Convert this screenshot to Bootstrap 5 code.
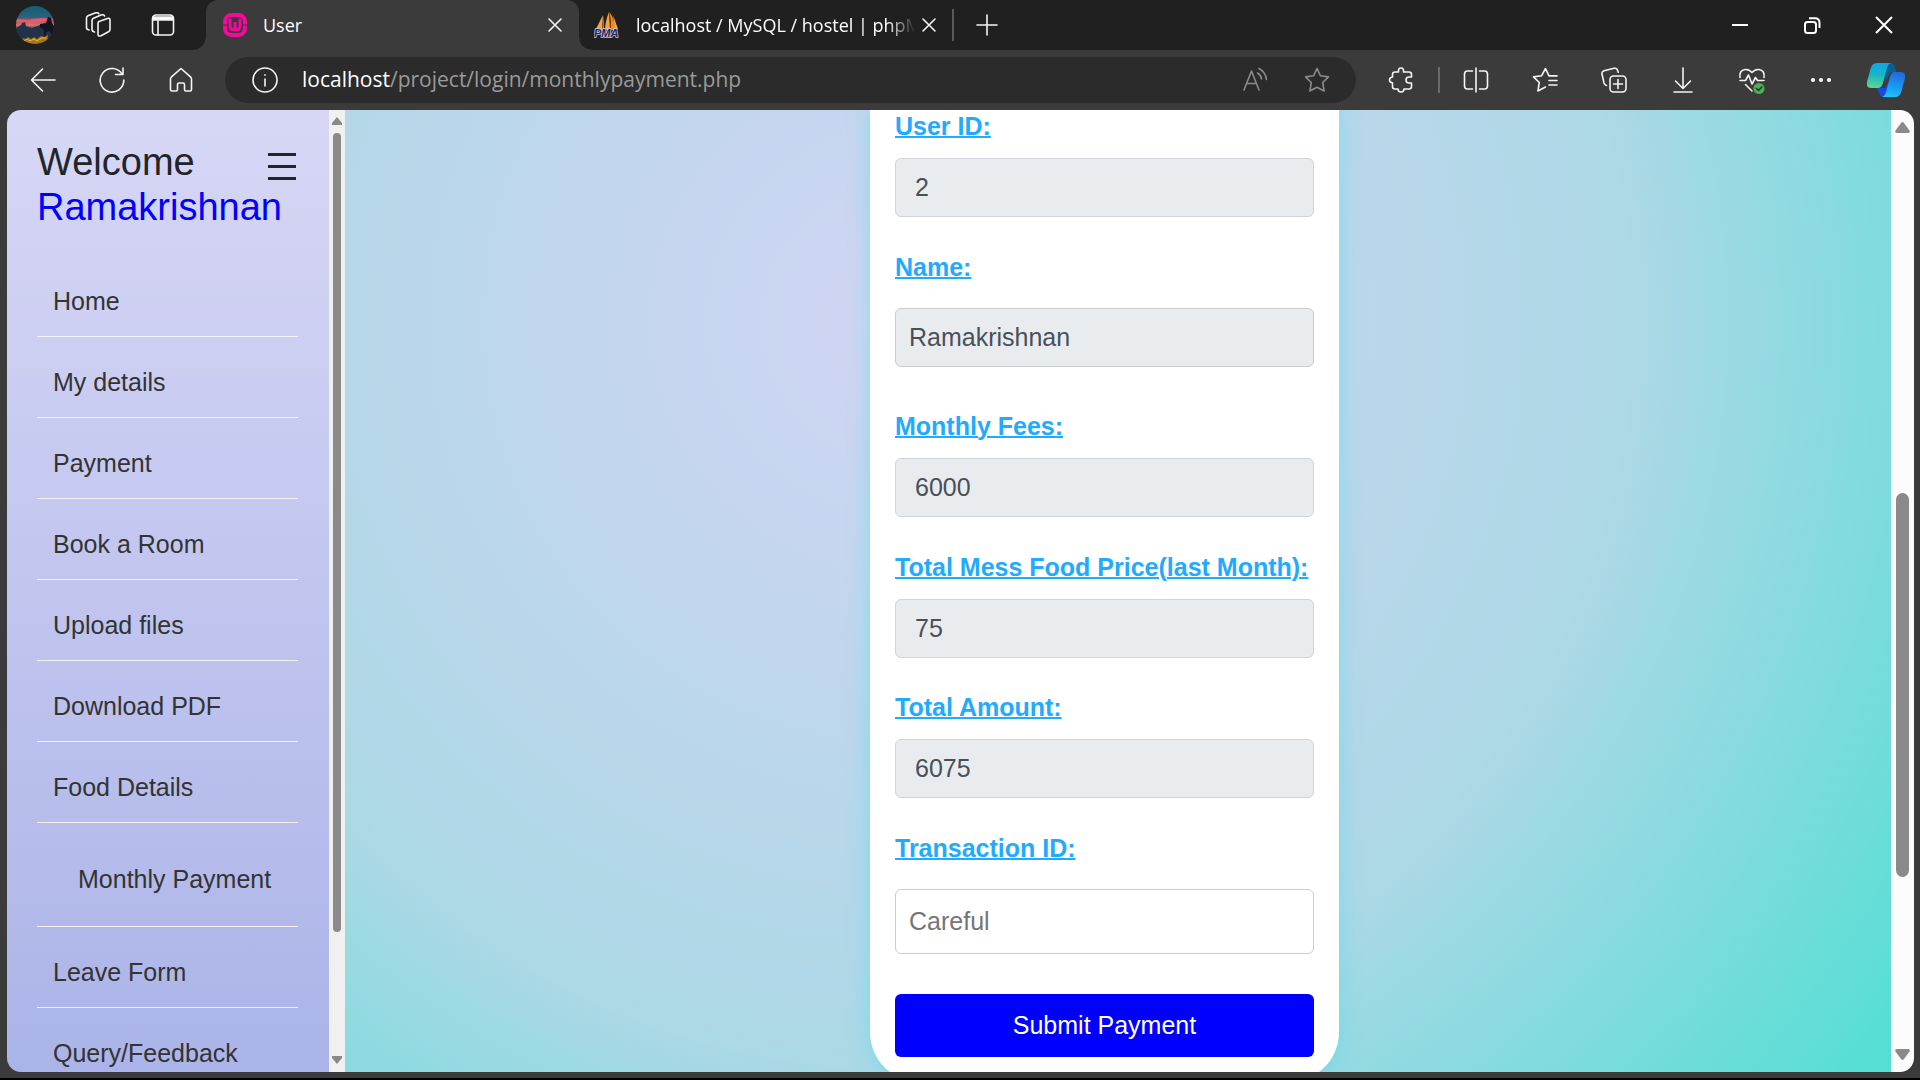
<!DOCTYPE html>
<html lang="en">
<head>
<meta charset="utf-8">
<meta name="viewport" content="width=device-width, initial-scale=1">
<title>User</title>
<link href="https://cdn.jsdelivr.net/npm/bootstrap@5.3.0/dist/css/bootstrap.min.css" rel="stylesheet">
<style>
  body { font-family: "Liberation Sans", Arial, sans-serif; font-size: 25px; }
  svg { display: block; }
  .line-icon { width: 26px; height: 26px; fill: none; stroke: #f4f4f4; stroke-width: 1.6; stroke-linecap: round; stroke-linejoin: round; flex: none; }

  /* browser window */
  .browser { background: #3b3b3b; border-bottom: 2px solid #000; overflow: hidden; font-family: "Open Sans", "Noto Sans", sans-serif; }
  .plain-btn { background: none; border: 0; padding: 0; display: flex; align-items: center; justify-content: center; flex: none; }
  .tab-strip { height: 50px; background: #202020; color: #fff; font-size: 18px; }
  .avatar { margin-left: 16px; margin-right: 11px; }
  .strip-btn { width: 65px; height: 50px; }
  .tab-active { position: relative; width: 373px; height: 50px; margin-left: 11px; padding: 0 10px 0 17px; background: #3b3b3b; border-radius: 12px 12px 0 0; }
  .tab-active::before, .tab-active::after { content: ""; position: absolute; bottom: 0; width: 12px; height: 12px; }
  .tab-active::before { right: 100%; background: radial-gradient(circle at 0 0, #202020 11px, #3b3b3b 12px); }
  .tab-active::after { left: 100%; background: radial-gradient(circle at 100% 0, #202020 11px, #3b3b3b 12px); }
  .tab-idle { width: 373px; padding: 0 9px 0 15px; }
  .tab-title { margin-left: 16px; line-height: 26px; white-space: nowrap; overflow: hidden; }
  .tab-fade { -webkit-mask-image: linear-gradient(to right, #000 90%, transparent 100%); mask-image: linear-gradient(to right, #000 90%, transparent 100%); }
  .tab-close { width: 28px; height: 28px; }
  .strip-rule { width: 2px; height: 32px; background: #5a5a5a; }
  .win-btn { width: 72px; height: 50px; }
  .toolbar-row { height: 60px; padding-left: 8px; padding-right: 4px; }
  .tool-btn { width: 69px; height: 46px; }
  .tool-btn-brand { width: 61px; height: 46px; }
  .tool-rule { width: 2px; height: 26px; margin: 0 1px 0 3px; background: #6a6a6a; }
  .omnibox { height: 46px; margin: 0 10px; padding: 0 26px 0 27px; border-radius: 23px; background: #2b2b2b; color: #9a9a9a; font-size: 21px; }
  .omnibox .dim { stroke: #8b8b8b; }
  .omni-actions { gap: 36px; }

  /* page area */
  .viewport { margin: 0 6px 6px 7px; border-radius: 14px; overflow: hidden; min-height: 0; font-family: "Liberation Sans", Arial, sans-serif; }
  .side { width: 322px; padding: 30px 31px 0 30px; overflow: hidden; background: linear-gradient(#d7d7f5, #abb4e8); }
  .side-title { font-size: 38px; line-height: 45px; color: #212529; }
  .side-toggle { height: 45px; padding-top: 8px; margin-right: 2px; }
  .side-name { font-size: 38px; line-height: 45px; color: #00f; margin-bottom: 26px; }
  .side-menu a { display: block; padding: 27px 16px 16px; line-height: 37px; color: #333; text-decoration: none; border-bottom: 1px solid #f2f2f4; white-space: nowrap; }
  .side-menu .sub-link a { padding: 38px 0 28px 41px; }

  .scroll-track { width: 16px; padding: 7px 0 8px; background: #f0f0f0; }
  .scroll-track-page { width: 23px; padding: 12px 0; background: #fcfcfc; }
  .scroll-track svg, .scroll-track-page svg { fill: #8a8a8a; flex: none; }
  .scroll-body { width: 8px; margin-top: 8px; }
  .scroll-track-page .scroll-body { width: 13px; margin-top: 0; }
  .scroll-thumb { width: 100%; border-radius: 7px; background: #8a8a8a; }

  .stage { min-width: 0; padding-right: 27px; overflow: hidden;
    background: radial-gradient(circle at 36% 22%, #d1d5f3 0, #add8e6 730px, #40e0d0 1340px); }
  .pay-card { width: 469px; padding: 1px 25px 25px; background: #fff; border-radius: 0 0 50px 50px; box-shadow: 0 0 20px rgba(64, 224, 240, .5); }
  .pay-label { display: block; width: fit-content; margin-bottom: 17px; line-height: 30px; font-weight: 700; color: #22aaff; text-decoration: underline; text-decoration-thickness: 2px; white-space: nowrap; }
  .pay-field { margin-bottom: 35px; }
  .pay-field .form-control { height: 59px; padding: 0 19px; font-size: 25px; color: #495057; border: 1px solid #ced4da; border-radius: 6px; background: #e9ecef; }
  .pay-field-wide { margin-bottom: 44px; }
  .pay-field-wide .pay-label { margin-bottom: 26px; }
  .pay-field-wide .form-control { padding: 0 13px; border-color: #ccc; }
  .pay-field-tight { margin-bottom: 34px; }
  .pay-entry { margin-bottom: 40px; }
  .pay-entry .form-control { height: 65px; background: #fff; }
  .pay-entry .form-control::placeholder { color: #757575; opacity: 1; }
  .pay-submit { height: 63px; font-size: 25px; color: #fff; background: #00f; border: 0; border-radius: 6px; }
</style>
<script src="https://cdn.jsdelivr.net/npm/bootstrap@5.3.0/dist/js/bootstrap.bundle.min.js"></script>
</head>
<body>
<div class="browser vh-100 d-flex flex-column">

  <header class="tab-strip d-flex align-items-center flex-shrink-0">
    <button class="plain-btn avatar" aria-label="Profile">
      <svg width="38" height="38" viewBox="0 0 38 38">
        <defs>
          <clipPath id="av"><circle cx="19" cy="19" r="19"/></clipPath>
          <linearGradient id="sky" x1="0" y1="0" x2="0" y2="1">
            <stop offset="0" stop-color="#145f75"/><stop offset=".28" stop-color="#27617a"/><stop offset=".4" stop-color="#b8566a"/><stop offset=".5" stop-color="#d8746c"/><stop offset=".6" stop-color="#53506e"/><stop offset="1" stop-color="#1d2c40"/>
          </linearGradient>
        </defs>
        <g clip-path="url(#av)">
          <rect width="38" height="38" fill="url(#sky)"/>
          <path d="M0 13l12 1 14-2 12 1v1l-14 2-10 1-14-1z" fill="#e65d68"/>
          <path d="M0 22l5-3 1-2 3-1 1 4 6 2 8-3 14 4v15H0z" fill="#22324a"/>
          <path d="M24 18l6-1 2-6 3 1 1 5 2 3v10l-2 2-2-7-4 1-1 7h-1v-9l-4-3z" fill="#11151f"/>
          <path d="M4 38l3-6 3 1 2-2 3 2 3-2 3 2 4-3 3 1 4-2-1 9z" fill="#a8741c"/>
          <path d="M8 35l3-2 3 2 4-2 3 2 5-3 4 0" stroke="#f2b735" fill="none"/>
        </g>
      </svg>
    </button>
    <button class="plain-btn strip-btn" aria-label="Workspaces">
      <svg class="line-icon" viewBox="0 0 26 26"><path d="M14 9.500l8.500-3q2.500-.8 2.500 1.500v9.500q0 1.500-1.500 2.200l-7.500 4q-3 1.200-3-1.500V11.500q0-1.500 1-2z"/><path d="M9.500 20q-2.500-.5-2.500-2.500V8.500q0-1.500 1.500-2.200l7.500-3.300q3-.9 3.500 1"/><path d="M4 18q-2.500-.5-2.500-2.500V6q0-1.500 1.500-2.200L10 1q3-.9 3.800.7"/></svg>
    </button>
    <button class="plain-btn strip-btn" aria-label="Tab actions">
      <svg class="line-icon" viewBox="0 0 26 26"><rect x="2.500" y="3" width="21" height="20" rx="3.500"/><path d="M3 5h20v3H3z" fill="#fff"/><path d="M8 9v14"/></svg>
    </button>

    <div class="tab-active d-flex align-items-center">
      <svg width="24" height="24" viewBox="0 0 24 24" class="flex-shrink-0">
        <rect x="2" y="2" width="20" height="20" rx="6.500" fill="none" stroke="#f7079b" stroke-width="4"/>
        <path d="M0 12h24" stroke="#3b3b3b" stroke-width="1"/>
        <path d="M5 5h14v14H5z" fill="#3b3b3b"/>
        <path d="M7 5.500V13q0 4 5 4t5-4V5.500M12 9v8" fill="none" stroke="#f7079b" stroke-width="3"/>
      </svg>
      <span class="tab-title flex-fill">User</span>
      <button class="plain-btn tab-close" aria-label="Close tab"><svg class="line-icon" viewBox="0 0 26 26"><path d="M7 7l12 12M19 7L7 19"/></svg></button>
    </div>
    <div class="tab-idle d-flex align-items-center">
      <svg width="26" height="26" viewBox="0 0 26 26" class="flex-shrink-0">
        <path d="M9 3L1.500 18H8z" fill="#f6a545"/><path d="M10 3v16H8z" fill="#c9771d"/>
        <path d="M15 0q-4 10-4 18h5z" fill="#f9a13a"/><path d="M15.500 0q2 9 1 18h5q-1-11-6-18z" fill="#f28a12"/><path d="M19 3l5 14-3 1z" fill="#f6a545"/>
        <text x="0" y="25" font-family="Liberation Sans" font-size="11" font-weight="700" font-style="italic" fill="#25265e" stroke="#c9c9df" stroke-width="1.500" paint-order="stroke">PMA</text>
      </svg>
      <span class="tab-title tab-fade flex-fill">localhost / MySQL / hostel | phpM</span>
      <button class="plain-btn tab-close" aria-label="Close tab"><svg class="line-icon" viewBox="0 0 26 26"><path d="M7 7l12 12M19 7L7 19"/></svg></button>
    </div>
    <div class="strip-rule"></div>
    <button class="plain-btn strip-btn" aria-label="New tab"><svg class="line-icon" viewBox="0 0 26 26"><path d="M13 3v20M3 13h20"/></svg></button>

    <div class="d-flex ms-auto">
      <button class="plain-btn win-btn" aria-label="Minimize"><svg width="16" height="16"><path d="M0 8h16" stroke="#fff" stroke-width="2"/></svg></button>
      <button class="plain-btn win-btn" aria-label="Restore"><svg width="18" height="18" fill="none" stroke="#fff" stroke-width="2"><rect x="2" y="6" width="11" height="11" rx="2.500"/><path d="M6 2.200h6q4.500 0 4.500 4.500V12"/></svg></button>
      <button class="plain-btn win-btn" aria-label="Close"><svg width="18" height="18" stroke="#fff" stroke-width="2"><path d="M1 1l16 16M17 1L1 17"/></svg></button>
    </div>
  </header>

  <nav class="toolbar-row d-flex align-items-center flex-shrink-0" aria-label="Toolbar">
    <button class="plain-btn tool-btn" aria-label="Back"><svg class="line-icon" viewBox="0 0 26 26"><path d="M1.500 13H25M12.500 2L1.500 13l11 11"/></svg></button>
    <button class="plain-btn tool-btn" aria-label="Refresh"><svg class="line-icon" viewBox="0 0 26 26"><path d="M23.300 7.500A11.800 11.800 0 1 0 24.800 13M24 1v6.500h-7.500"/></svg></button>
    <button class="plain-btn tool-btn" aria-label="Home"><svg class="line-icon" viewBox="0 0 26 26"><path d="M13 1.500l-9.800 8.700q-.7.700-.7 1.800v10.500q0 1.500 1.500 1.500h4q1.500 0 1.500-1.500v-5q0-1.500 1.500-1.500h4q1.500 0 1.500 1.500v5q0 1.500 1.500 1.500h4q1.500 0 1.500-1.500V12q0-1.100-.7-1.800z"/></svg></button>

    <div class="omnibox d-flex align-items-center flex-fill">
      <svg class="line-icon" viewBox="0 0 26 26"><circle cx="13" cy="13" r="12"/><path d="M13 12v7M13 7.800v.4"/></svg>
      <span class="flex-fill ms-4"><span class="text-white">localhost</span>/project/login/monthlypayment.php</span>
      <div class="omni-actions d-flex">
        <button class="plain-btn" aria-label="Read aloud"><svg class="line-icon dim" viewBox="0 0 26 26"><path d="M2 23L9.500 4 17 23M4.500 16.500h10M15.500 6q3.500 2 4 6M17 1.500q6.500 3.500 7.500 11"/></svg></button>
        <button class="plain-btn" aria-label="Add to favorites"><svg class="line-icon dim" viewBox="0 0 26 26"><path d="M13 1.500l3.500 7.300 8 1.100-5.800 5.600 1.400 8.500L13 20.200 5.900 24l1.400-8.500L1.500 9.900l8-1.100z"/></svg></button>
      </div>
    </div>

    <button class="plain-btn tool-btn" aria-label="Extensions"><svg class="line-icon" viewBox="0 0 26 26"><path d="M4.500 7.500q0-2.500 2.500-2.500h3.500q-.5-4 2.500-4t2.500 4H21q2.500 0 2.500 2.500V10H21q-3 0-3 3t3 3h2.500v3.500q0 2.500-2.500 2.500h-5q0 3-3 3t-3-3H7q-2.500 0-2.500-2.500v-3.800Q1.500 15.500 1.500 13t3-3z"/></svg></button>
    <div class="tool-rule"></div>
    <button class="plain-btn tool-btn" aria-label="Split screen"><svg class="line-icon" viewBox="0 0 26 26"><path d="M9.500 4H4.500Q1.500 4 1.500 7v12q0 3 3 3h5M16.500 4h5q3 0 3 3v12q0 3-3 3h-5M13 1v24"/></svg></button>
    <button class="plain-btn tool-btn" aria-label="Favorites"><svg class="line-icon" viewBox="0 0 26 26"><path d="M17 8.800L13.500 1.500 9.500 8.800l-8 1.100 5.800 5.600L5.900 24l7.600-4M17.500 8.900H25M17 13.500h8M17 18h8"/></svg></button>
    <button class="plain-btn tool-btn" aria-label="Collections"><svg class="line-icon" viewBox="0 0 26 26"><rect x="9" y="9" width="16" height="16" rx="3.500"/><path d="M17 12.500v9M12.500 17h9M5.500 18.500Q3.500 18 3 16L1 7q-.5-2.500 2-3.200l10-2.500q3-.5 3.500 2l.7 2"/></svg></button>
    <button class="plain-btn tool-btn" aria-label="Downloads"><svg class="line-icon" viewBox="0 0 26 26"><path d="M13 1v20M5.500 14l7.500 7.500 7.500-7.500M4 25h18"/></svg></button>
    <button class="plain-btn tool-btn" aria-label="Browser essentials"><svg class="line-icon" viewBox="0 0 26 26" overflow="visible"><path d="M1 10.500Q0 3.500 6 2.500q4-.5 7 3 3-3.500 7-3 6 1 5 8M1 13.500h5.500l3-5.500 3.500 9 3.500-6.500 2 3H25M6.500 17.500L13 24"/><circle cx="20" cy="21.500" r="5.500" fill="#4caf50" stroke="none"/><path d="M17.500 21.500l2 2 3.300-3.500" stroke="#223333"/></svg></button>
    <button class="plain-btn tool-btn" aria-label="Settings and more"><svg width="22" height="6" fill="#fff"><circle cx="3" cy="3" r="2"/><circle cx="11" cy="3" r="2"/><circle cx="19" cy="3" r="2"/></svg></button>
    <button class="plain-btn tool-btn-brand" aria-label="Copilot">
      <svg width="38" height="34" viewBox="0 0 38 34">
        <defs>
          <linearGradient id="cpA" x1=".4" y1="0" x2=".3" y2="1"><stop offset="0" stop-color="#0fa8e8"/><stop offset=".45" stop-color="#16b5c4"/><stop offset="1" stop-color="#5fd68c"/></linearGradient>
          <linearGradient id="cpB" x1=".6" y1="0" x2=".4" y2="1"><stop offset="0" stop-color="#2368dc"/><stop offset=".6" stop-color="#189cf5"/><stop offset="1" stop-color="#1fc4fb"/></linearGradient>
        </defs>
        <path d="M20 0h3q4 0 5 4l1.500 5H26q-3 0-4 3l-4 8z" fill="#0b5f8f"/>
        <path d="M10 25h8l5-9-4 18h-2q-4 0-5-4z" fill="#1a49dd"/>
        <path d="M10 0h14q-3 1-4 5l-4 15q-1.500 5-5 5H4q-5 0-4-6L3.500 6Q5 0 10 0z" fill="url(#cpA)"/>
        <path d="M27 9h7q5 0 4 6l-3.500 13q-1.500 6-6.500 6H15q3-1 4-5l4-15q1.500-5 4-5z" fill="url(#cpB)"/>
      </svg>
    </button>
  </nav>

  <div class="viewport d-flex flex-fill">
    <aside class="side flex-shrink-0">
      <div class="d-flex justify-content-between">
        <div class="side-title">Welcome</div>
        <button class="plain-btn side-toggle" aria-label="Toggle menu"><svg width="28" height="28" fill="#212529"><path d="M0 0h28v3H0zM0 12h28v3H0zM0 24h28v3H0z"/></svg></button>
      </div>
      <div class="side-name">Ramakrishnan</div>
      <ul class="side-menu list-unstyled mb-0">
        <li><a href="#">Home</a></li>
        <li><a href="#">My details</a></li>
        <li><a href="#">Payment</a></li>
        <li><a href="#">Book a Room</a></li>
        <li><a href="#">Upload files</a></li>
        <li><a href="#">Download PDF</a></li>
        <li><a href="#">Food Details</a></li>
        <li class="sub-link"><a href="#">Monthly Payment</a></li>
        <li><a href="#">Leave Form</a></li>
        <li><a href="#">Query/Feedback</a></li>
      </ul>
    </aside>
    <div class="scroll-track d-flex flex-column align-items-center flex-shrink-0" aria-hidden="true">
      <svg width="10" height="8"><path d="M5 0l5 6v2H0V6z"/></svg>
      <div class="scroll-body d-flex flex-column flex-fill">
        <div class="scroll-thumb" style="flex: 799 1 0"></div>
        <div style="flex: 124 1 0"></div>
      </div>
      <svg width="10" height="8"><path d="M0 0h10v2L5 8 0 2z"/></svg>
    </div>

    <main class="stage d-flex flex-fill justify-content-center align-items-start">
      <form class="pay-card flex-shrink-0">
        <div class="pay-field">
          <label class="pay-label" for="userId">User ID:</label>
          <input class="form-control" id="userId" type="text" value="2" readonly>
        </div>
        <div class="pay-field pay-field-wide">
          <label class="pay-label" for="userName">Name:</label>
          <input class="form-control" id="userName" type="text" value="Ramakrishnan" readonly>
        </div>
        <div class="pay-field">
          <label class="pay-label" for="fees">Monthly Fees:</label>
          <input class="form-control" id="fees" type="text" value="6000" readonly>
        </div>
        <div class="pay-field pay-field-tight">
          <label class="pay-label" for="mess">Total Mess Food Price(last Month):</label>
          <input class="form-control" id="mess" type="text" value="75" readonly>
        </div>
        <div class="pay-field">
          <label class="pay-label" for="total">Total Amount:</label>
          <input class="form-control" id="total" type="text" value="6075" readonly>
        </div>
        <div class="pay-field pay-field-wide pay-entry">
          <label class="pay-label" for="txn">Transaction ID:</label>
          <input class="form-control" id="txn" type="text" placeholder="Careful">
        </div>
        <button class="btn pay-submit w-100" type="submit">Submit Payment</button>
      </form>
    </main>

    <div class="scroll-track-page d-flex flex-column align-items-center flex-shrink-0" aria-hidden="true">
      <svg width="15" height="11"><path d="M6 1q1.500-2 3 0l5.500 7.500Q15.500 11 13 11H2Q-.5 11 .5 8.500z"/></svg>
      <div class="scroll-body d-flex flex-column flex-fill">
        <div style="flex: 359 1 0"></div>
        <div class="scroll-thumb" style="flex: 383 1 0"></div>
        <div style="flex: 172 1 0"></div>
      </div>
      <svg width="15" height="11"><path d="M6 10q1.500 2 3 0l5.500-7.500Q15.500 0 13 0H2Q-.5 0 .5 2.500z"/></svg>
    </div>
  </div>
</div>
</body>
</html>
